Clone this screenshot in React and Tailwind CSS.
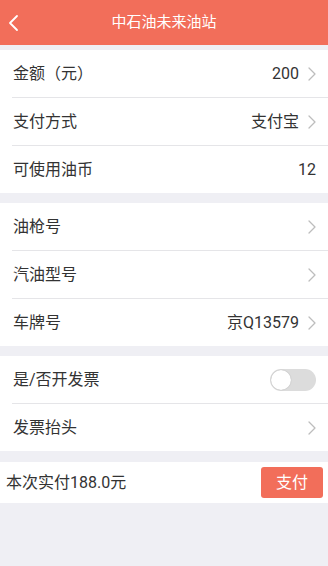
import { useState } from 'react';

const Chevron = () => (
    <svg width="8" height="14" viewBox="0 0 8 14" fill="none" className="ml-[9px] shrink-0">
        <path d="M1 1l6 6-6 6" stroke="#bdbdbd" strokeWidth="1.3" strokeLinecap="round" strokeLinejoin="round" />
    </svg>
);

function Row({ label, value, arrow = true, last = false, children }) {
    return (
        <div className="pl-3">
            <div className={`flex items-center pr-3 ${last ? 'h-[47px]' : 'h-[48px] border-b border-[#e5e5e8]'}`}>
                <span className="pl-px flex-1 text-[16px] text-[#333]">{label}</span>
                {value && <span className="text-[16px] text-[#333]">{value}</span>}
                {children}
                {arrow && <Chevron />}
            </div>
        </div>
    );
}

export default function App() {
    const [invoice, setInvoice] = useState(false);

    return (
        <div className="w-[328px] h-[566px] bg-[#efeff4] flex flex-col" style={{ fontFamily: 'Roboto, "Noto Sans CJK SC", sans-serif' }}>
            {/* Header */}
            <div className="h-[45px] shrink-0 bg-[#f26e5a] flex items-center relative">
                <svg width="12" height="18" viewBox="0 0 12 18" fill="none" className="ml-[8px]">
                    <path d="M9 2L2 9l7 7" stroke="#fff" strokeWidth="1.8" strokeLinecap="round" strokeLinejoin="round" />
                </svg>
                <span className="absolute inset-0 flex items-center justify-center text-[15px] text-white">中石油未来油站</span>
            </div>

            <div className="mt-[5px] bg-white">
                <Row label="金额（元）" value="200" />
                <Row label="支付方式" value="支付宝" />
                <Row label="可使用油币" value="12" arrow={false} last />
            </div>

            <div className="mt-[10px] bg-white">
                <Row label="油枪号" />
                <Row label="汽油型号" />
                <Row label="车牌号" value="京Q13579" last />
            </div>

            <div className="mt-[10px] bg-white">
                <Row label="是/否开发票" arrow={false}>
                    <button
                        type="button"
                        onClick={() => setInvoice(!invoice)}
                        className={`w-[46px] h-[22px] rounded-full p-px flex items-center ${invoice ? 'bg-[#f26e5a] justify-end' : 'bg-[#dcdcdc] justify-start'}`}
                    >
                        <span className="w-[20px] h-[20px] rounded-full bg-white shadow-[0_0_1px_rgba(0,0,0,0.3)]" />
                    </button>
                </Row>
                <Row label="发票抬头" last />
            </div>

            <div className="mt-[11px] h-[41px] shrink-0 bg-white flex items-center pl-[6px] pr-[5px]">
                <span className="flex-1 text-[16px] text-[#333]">本次实付188.0元</span>
                <button type="button" className="w-[62px] h-[31px] rounded-[3px] bg-[#f26e5a] text-white text-[16px]">支付</button>
            </div>
        </div>
    );
}
